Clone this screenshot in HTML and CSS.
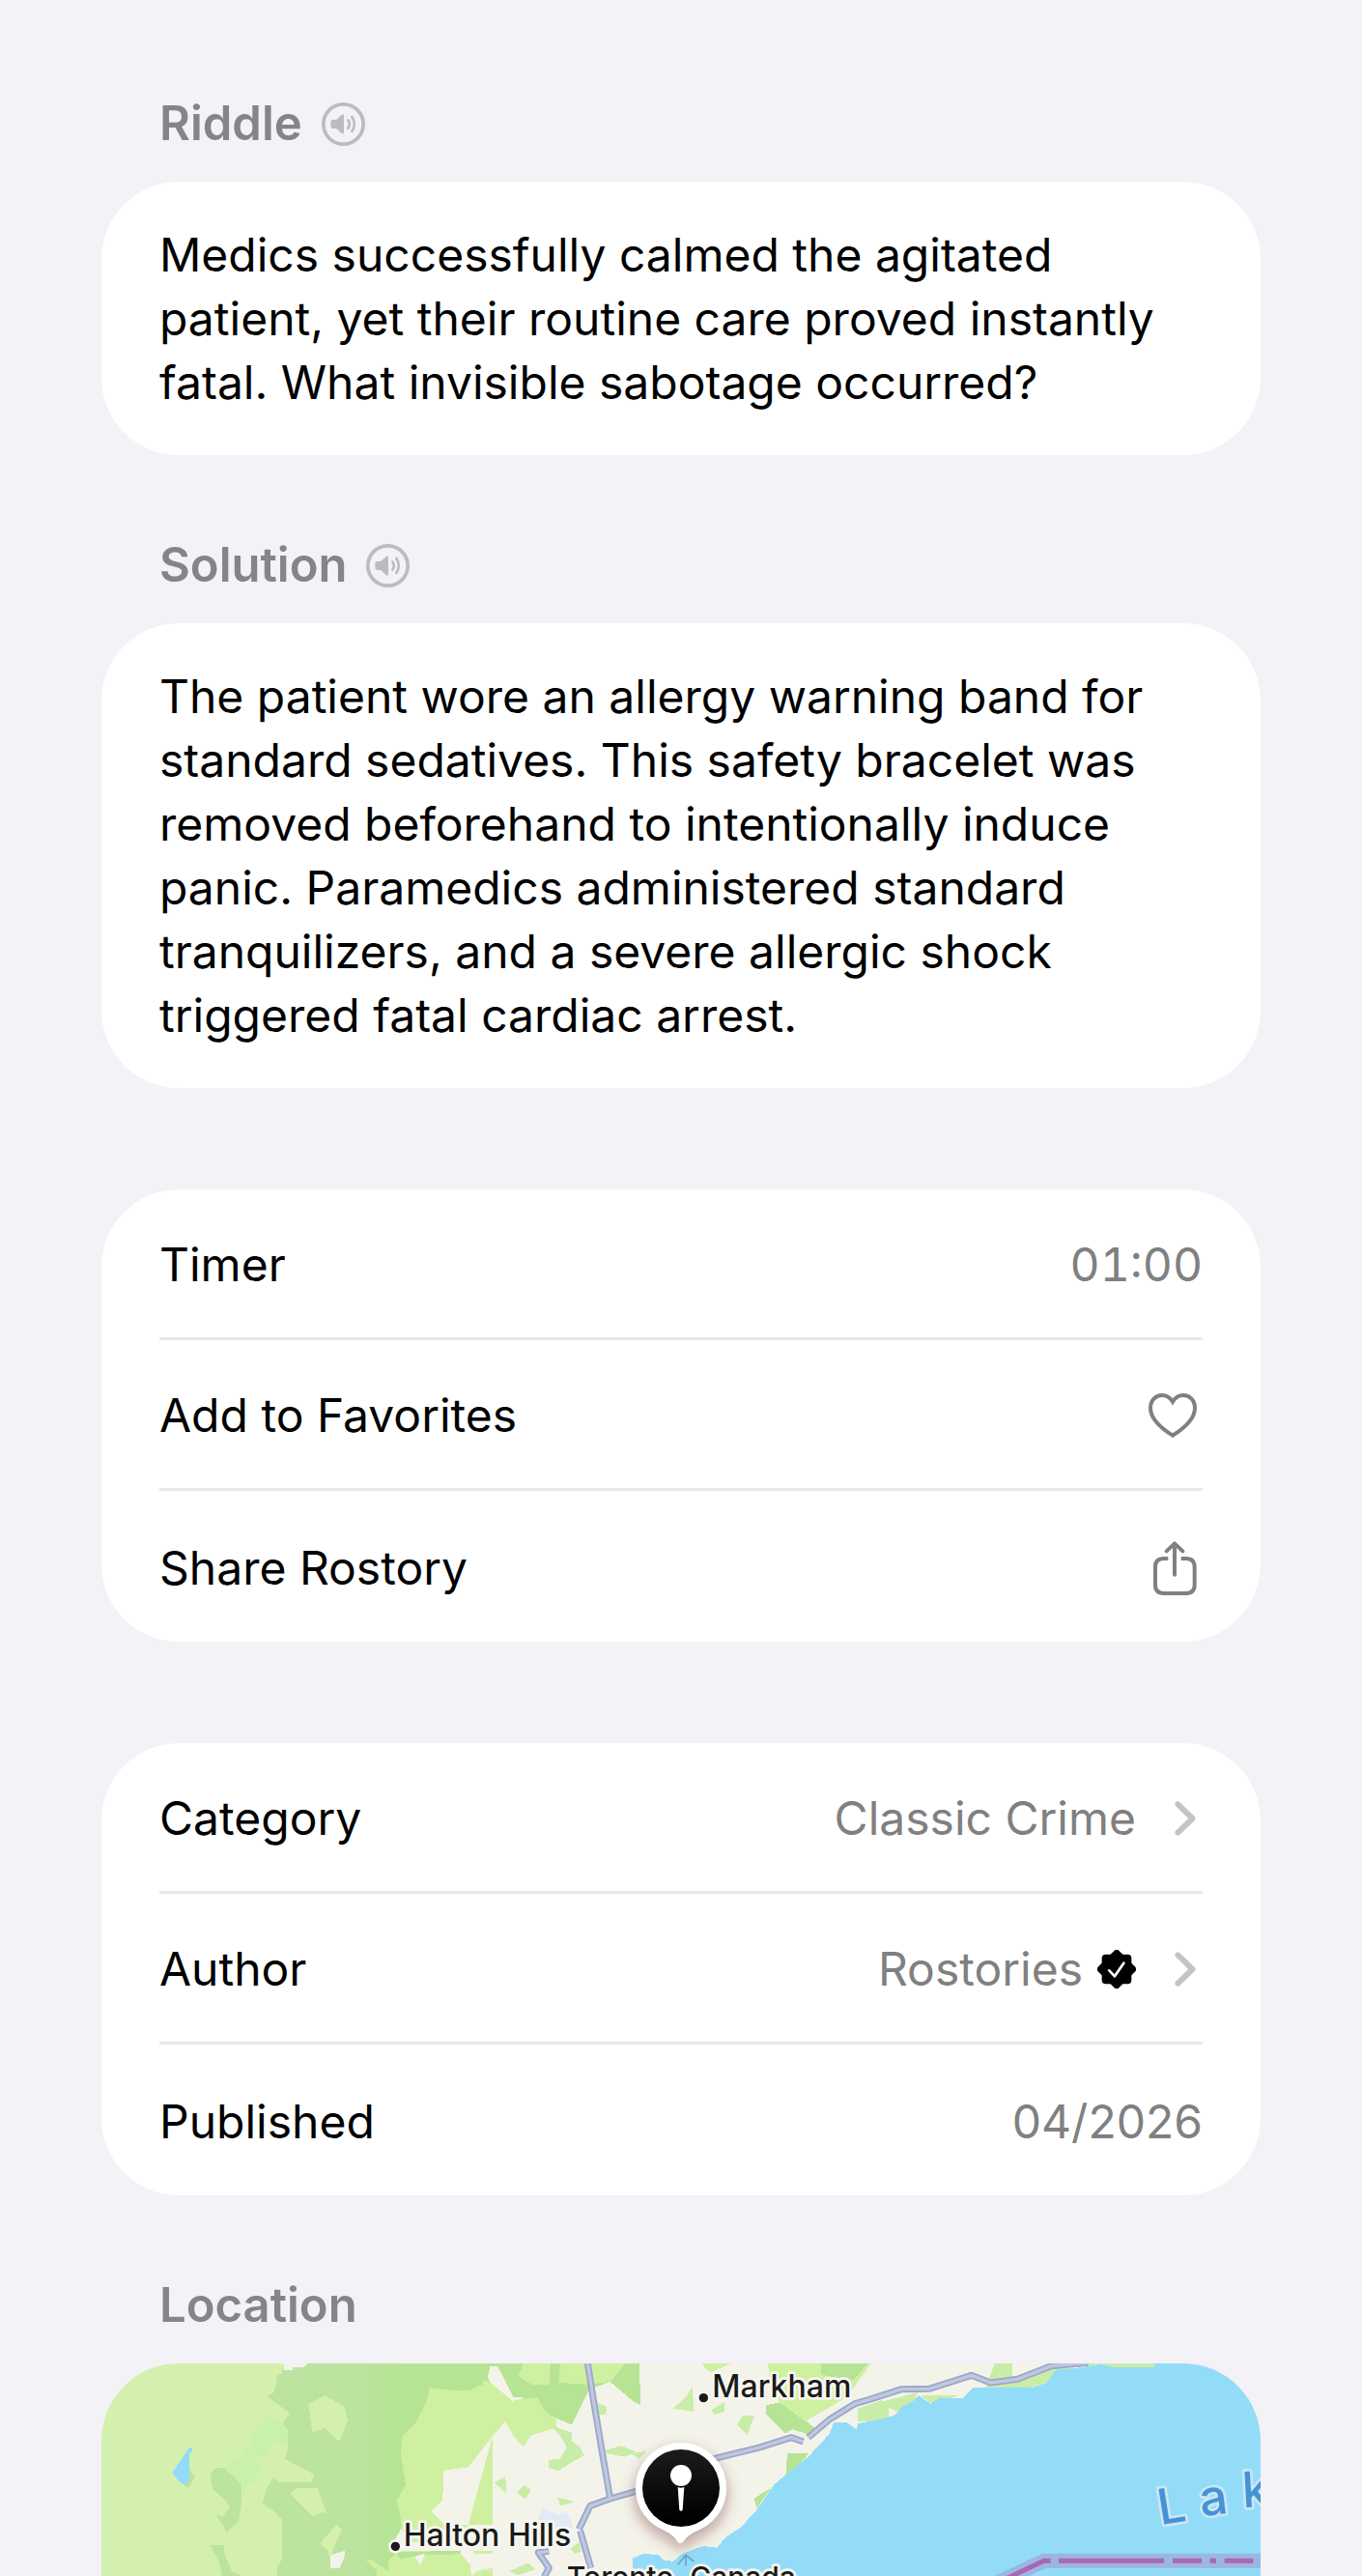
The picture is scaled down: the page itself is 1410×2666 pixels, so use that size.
FILE: index.html
```html
<!DOCTYPE html>
<html lang="en">
<head>
  <meta charset="UTF-8">
  <meta name="viewport" content="width=device-width, initial-scale=1.0">
  <title>Rostory</title>
  <link rel="stylesheet" href="styles.css">
</head>
<body>
  <svg class="defs" aria-hidden="true">
    <symbol id="speaker" viewBox="0 0 135 135">
      <circle cx="67.5" cy="67.5" r="62" fill="none" stroke="currentColor" stroke-width="11"/>
      <path d="M34 54H45L62 39Q69 34 69 42V93Q69 101 62 96L45 81H34Q28 81 28 75V60Q28 54 34 54Z" fill="currentColor"/>
      <path d="M82 55Q91 67.500 82 80M94 45Q109 67.500 94 90" fill="none" stroke="currentColor" stroke-width="8" stroke-linecap="round"/>
    </symbol>
    <symbol id="chevron" viewBox="0 0 66 109">
      <path d="M10 10L56 54.500L10 99" fill="none" stroke="currentColor" stroke-width="18" stroke-linecap="round" stroke-linejoin="round"/>
    </symbol>
  </svg>

  <main class="page">
    <section>
      <div class="heading">
        <h2>Riddle</h2>
        <button class="speak" type="button" aria-label="Read riddle"><svg><use href="#speaker"/></svg></button>
      </div>
      <p class="card text">Medics successfully calmed the agitated patient, yet their routine care proved instantly fatal. What invisible sabotage occurred?</p>
    </section>

    <section>
      <div class="heading">
        <h2>Solution</h2>
        <button class="speak" type="button" aria-label="Read solution"><svg><use href="#speaker"/></svg></button>
      </div>
      <p class="card text">The patient wore an allergy warning band for standard sedatives. This safety bracelet was removed beforehand to intentionally induce panic. Paramedics administered standard tranquilizers, and a severe allergic shock triggered fatal cardiac arrest.</p>
    </section>

    <section class="card list">
      <div class="row">
        <span>Timer</span>
        <span class="value time">01:00</span>
      </div>
      <button class="row" type="button">
        <span>Add to Favorites</span>
        <svg class="icon heart" viewBox="0 0 150 138">
          <path d="M75 131C51 116 6 84 6 46C6 22 22 6 42 6C57 6 68 14 75 26C82 14 93 6 108 6C128 6 144 22 144 46C144 84 99 116 75 131Z"/>
        </svg>
      </button>
      <button class="row" type="button">
        <span>Share Rostory</span>
        <svg class="icon share" viewBox="0 0 135 168">
          <path d="M46 54H32C14 54 6 62 6 80V136C6 154 14 162 32 162H102C120 162 128 154 128 136V80C128 62 120 54 102 54H86"/>
          <path d="M66 104V8M41 31L66 7L91 31" stroke-linecap="round" stroke-linejoin="round"/>
        </svg>
      </button>
    </section>

    <section class="card list">
      <a class="row" href="#category">
        <span>Category</span>
        <span class="value">Classic Crime</span>
        <svg class="chevron"><use href="#chevron"/></svg>
      </a>
      <a class="row" href="#author">
        <span>Author</span>
        <span class="value">Rostories</span>
        <svg class="badge" viewBox="0 0 120 120">
          <rect x="14" y="14" width="92" height="92" rx="12"/>
          <rect x="14" y="14" width="92" height="92" rx="12" transform="rotate(45 60 60)"/>
          <path d="M37 64L54 82L82 41" fill="none" stroke="#fff" stroke-width="8" stroke-linecap="round" stroke-linejoin="round"/>
        </svg>
        <svg class="chevron"><use href="#chevron"/></svg>
      </a>
      <div class="row">
        <span>Published</span>
        <span class="value">04/2026</span>
      </div>
    </section>

    <section id="location">
      <div class="heading">
        <h2>Location</h2>
      </div>
      <div class="map">
        <svg viewBox="0 0 3600 660" role="img" aria-label="Map of Toronto, Canada">
          <defs>
            <linearGradient id="forest" x1="0" x2="1">
              <stop offset="0.35" stop-color="#bde3a1"/>
              <stop offset="0.6" stop-color="#b6e494"/>
            </linearGradient>
            <linearGradient id="pin" x1="0" y1="0" x2="0" y2="1">
              <stop offset="0" stop-color="#1c1c1c"/>
              <stop offset="0.9" stop-color="#000"/>
            </linearGradient>
            <filter id="shadow" x="-50%" y="-50%" width="200%" height="200%">
              <feDropShadow dx="0" dy="20" stdDeviation="22" flood-color="#5a1414" flood-opacity="0.4"/>
            </filter>
          </defs>
          <rect width="3600" height="660" fill="#f3f3ea"/>

          <!-- west side -->
          <g transform="translate(-45 -315)" shape-rendering="crispEdges">
            <rect x="45" y="315" width="700" height="663" fill="#d4f0af"/>
            <path fill="url(#forest)" d="M615 315H1260V978H590V950L607 920L605 800L575 770L545 750L555 710L570 685L580 668L595 684H700L706 660L615 612L623 580V520L607 500L630 470L560 418L580 405L590 375L588 355L605 345Z"/>
            <path fill="#f3f3ea" d="M613 315H685L675 326H640L638 335H613Z"/>
            <path fill="#c9f0ad" d="M505 540L565 475L606 495L623 520V560L580 560L550 605L515 600L545 640L510 690H495L490 720L480 690L425 640L485 600L490 575L515 565Z"/>
            <path fill="#bde3a1" d="M382 660L400 640H425L480 690V750L471 805L432 842L425 820L400 785L420 792L444 760L430 740L390 705ZM382 880H425V900L450 960L490 978H420L410 930ZM318 640L335 670L315 700L300 693Z"/>
            <path fill="#d4f0af" d="M688 440L740 415L800 450L810 490L790 545L780 557L740 515L700 530ZM630 720L650 702H715L740 770L755 787L735 775L700 790ZM722 875L775 817L792 830L770 880L755 920L748 895Z"/>
            <path fill="#f3f3ea" d="M757 950V910L800 897V915L785 950Z"/>
            <path fill="#93dcf8" d="M264 655L318 577H327V590L318 595V680L305 693L285 680Z"/>
            <path fill="#cff0a1" d="M1065 390L1130 398H1190L1245 372L1260 380V978H900V960L865 925H885L935 960V900L975 830V800L963 740L990 690L975 600L980 540L1020 500L1055 430Z"/>
            <path fill="#b6e494" d="M935 900L1195 897V906L1040 910L975 922L960 905L935 930Z"/>
            <path fill="#f3f3ea" d="M1260 540L1185 637L1160 640L1107 648L1105 740L1070 775L1110 815H1260V897H938L975 828L1000 870H1200V905H1260V950L1210 960L1195 978L1190 940L1160 905ZM1018 915L1050 905L1035 942ZM1260 325L1248 340V365L1260 385Z"/>
          </g>

          <!-- from Halton Hills to the lake -->
          <g transform="translate(1185 -45)">
            <g shape-rendering="crispEdges">
              <path fill="#b6e494" d="M0 45H485L490 175L470 165L395 102L330 125L300 185L275 235L180 195L120 150H90L60 100H0ZM880 175L930 165L1030 245L1010 265L960 250L940 262L880 205ZM945 325H1012L990 350L940 395ZM842 465L895 430L850 497Z"/>
              <path fill="#cff0a1" d="M0 95L30 110L90 160L170 150L190 190L228 220L230 245L150 268L125 305L95 270L70 225L0 305ZM125 45H210L205 110L150 110L110 85ZM240 45H440L430 60L395 102L320 110L235 105ZM680 45H770L710 72L690 60ZM885 45H1205L1130 150L1000 225L920 165L890 90Z"/>
              <path fill="#b6e494" d="M1050 45H1195L1150 98L1050 80Z"/>
              <path fill="#f3f3ea" d="M15 85L22 55H45L60 80L95 150V165L60 125L20 100Z"/>
              <path fill="#c9eda8" d="M205 235L275 260V285L300 305L315 330L280 350L235 378L205 370V345L240 340L260 305L240 270ZM355 168L385 180L380 205H355ZM378 315L430 300L475 320L440 335L385 325ZM460 325L510 317L485 340ZM590 185L630 150L650 118L655 195ZM708 190L750 165V195L720 205ZM790 235L805 208H843L820 268ZM35 415L70 395L72 447ZM105 445L130 422L150 440L130 467ZM232 460L285 475L240 487ZM272 620L300 600L305 630L285 635ZM80 690L140 665L160 685L110 702ZM0 680L15 700L0 708ZM1165 185L1235 160L1260 165V225H1165ZM1235 165L1350 135L1335 175L1300 197L1275 190ZM1360 145H1478L1395 172ZM1590 45H1645V120H1560ZM1645 100L1765 60H1845L1780 70L1765 100L1700 120H1645ZM1880 45H2085V57H1880Z"/>
              <path fill="#e2ebf5" d="M170 530L185 495L235 515L260 505L280 550L270 570Z"/>
              <path fill="#93dcf8" d="M465 708V650L500 635L545 640L560 655L590 660L620 635L685 612L725 617L760 580L800 555L850 500L905 420L1010 335L1075 265L1090 228H1130L1160 250L1165 232L1240 217L1280 205L1300 180L1340 160L1355 145L1390 170L1415 154L1490 152L1522 120H1705L1750 105L1780 65L1840 60L1915 48L1960 57H2085V45H2415V708Z"/>
            </g>

            <g fill="none" stroke="#9ba8ca" stroke-width="21" stroke-linejoin="round">
              <path d="M325 45L345 170L370 320L395 465M620 410L475 442L395 465L333 487L298 560M302 565L335 680M205 628L172 632L205 680L190 708M620 360L720 340L855 307L957 275L995 288M1010 275L1075 220L1155 170L1200 157L1300 125L1385 124L1517 82L1577 105L1660 94L1765 53L1880 43"/>
              <path stroke="#bfc8de" stroke-width="10" d="M325 45L345 170L370 320L395 465M620 410L475 442L395 465L333 487L298 560M302 565L335 680M205 628L172 632L205 680L190 708M620 360L720 340L855 307L957 275L995 288M1010 275L1075 220L1155 170L1200 157L1300 125L1385 124L1517 82L1577 105L1660 94L1765 53L1880 43"/>
            </g>

            <path d="M1550 749L1742 658H2415" fill="none" stroke="#9bb7e1" stroke-width="46"/>
            <path d="M1550 749L1742 658H1763M1788 658H2115M2142 658H2232M2258 658H2277M2303 658H2392" fill="none" stroke="#a967b5" stroke-width="15"/>

            <path d="M605 670L630 640L655 660M630 640V675" fill="none" stroke="#67a9c8" stroke-width="5"/>

            <g class="place">
              <circle cx="685" cy="152" r="14"/>
              <text x="712" y="150">Markham</text>
              <circle cx="-272" cy="613" r="14"/>
              <text x="-247" y="612">Halton Hills</text>
              <text class="city" x="616" y="742" text-anchor="middle">Toronto, Canada</text>
            </g>
            <g class="lake">
              <text transform="translate(2104 547) rotate(-9)">L</text>
              <text transform="translate(2231 520) rotate(-7)">a</text>
              <text transform="translate(2360 493) rotate(-3)">k</text>
            </g>

            <g filter="url(#shadow)">
              <path fill="#fff" d="M615 291A141 141 0 0 1 672 561Q635 576 620 600Q613 606 606 600Q592 576 558 561A141 141 0 0 1 615 291Z"/>
            </g>
            <circle cx="615" cy="432" r="120" fill="url(#pin)"/>
            <circle cx="615" cy="393" r="33" fill="#fff"/>
            <path fill="#fff" d="M605 429Q615 434 625 429L620 500Q615 506 610 500Z"/>
          </g>
        </svg>
      </div>
    </section>
  </main>
</body>
</html>
```
FILE: styles.css
```css
*{
  margin: 0;
  padding: 0;
  box-sizing: border-box;
}
body{
  background-color: #f2f2f7;
  color: #000;
  font-family: Inter, "Liberation Sans", sans-serif;
  font-size: 48px;
  line-height: 66px;
}
.defs{
  display: none;
}
.page{
  padding: 95px 105px 0;
}
.heading{
  display: flex;
  align-items: center;
  gap: 20px;
  margin-top: 81px;
  padding: 0 60px;
  margin-bottom: 27px;
}
section:first-child .heading{
  margin-top: 0;
}
h2{
  color: #858489;
  font-size: 49px;
  font-weight: 600;
}
button{
  border: none;
  background: none;
  color: inherit;
  font: inherit;
  text-align: left;
  cursor: pointer;
}
a{
  color: inherit;
  text-decoration: none;
}
.speak,.speak svg{
  display: block;
  width: 45px;
  height: 45px;
  color: #bcbbc0;
}
.card{
  background-color: #fff;
  border-radius: 80px;
}
.text{
  padding: 43px 60px 42px;
}
.list{
  margin-top: 105px;
  padding: 0 60px;
}
.row{
  display: flex;
  align-items: center;
  width: 100%;
  height: 156px;
  padding-top: 3px;
  border-bottom: 3px solid #e8e8e8;
}
.row:last-child{
  border-bottom: none;
}
.row span:first-child{
  margin-right: auto;
}
.value{
  color: #808080;
}
.time{
  font-variant-numeric: tabular-nums;
}
.icon{
  margin-right: 6px;
  fill: none;
  stroke: #808080;
  stroke-width: 12;
}
.heart{
  width: 50px;
  height: 46px;
}
.share{
  width: 45px;
  height: 56px;
}
.chevron{
  width: 22px;
  height: 36px;
  margin-left: 40px;
  margin-right: 7px;
  color: #c4c4c7;
}
.badge{
  width: 40px;
  height: 40px;
  margin-left: 15px;
}
.map{
  overflow: hidden;
  border-radius: 80px 80px 0 0;
}
.map svg{
  display: block;
  width: 100%;
}
.place{
  fill: #1a1a1a;
  stroke: #f6f6f0;
  stroke-width: 16px;
  stroke-linejoin: round;
  paint-order: stroke;
  font-size: 96px;
  font-weight: 500;
}
.city{
  font-size: 90px;
}
.lake{
  fill: #4692d6;
  stroke: #c9e6f3;
  stroke-width: 16px;
  stroke-linejoin: round;
  paint-order: stroke;
  font-size: 153px;
  font-weight: 500;
}
```
